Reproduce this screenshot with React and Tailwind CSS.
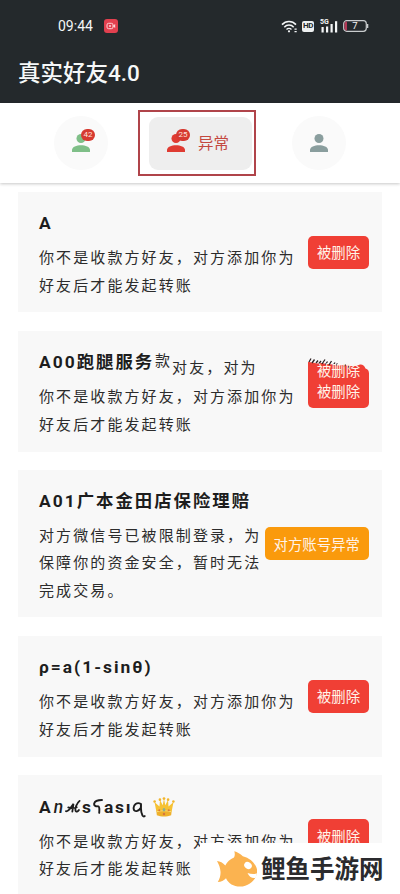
import React, { useState } from "react";
import clsx from "clsx";

const DELETED_TEXT = ["你不是收款方好友，对方添加你为", "好友后才能发起转账"];

const friendList = [
    { id: 1, name: "A", lines: DELETED_TEXT, status: "deleted", height: "h-[120px]" },
    { id: 2, name: "A00跑腿服务", lines: DELETED_TEXT, status: "deleted", height: "h-[121px]", overlap: true },
    {
        id: 3,
        name: "A01广本金田店保险理赔",
        lines: ["对方微信号已被限制登录，为", "保障你的资金安全，暂时无法", "完成交易。"],
        status: "abnormal",
        height: "h-[147px]",
    },
    { id: 4, name: "ρ=a(1-sinθ)", lines: DELETED_TEXT, status: "deleted", height: "h-[121px]" },
    { id: 5, name: "fancy", lines: DELETED_TEXT, status: "deleted", height: "h-[121px]" },
];

const PersonIcon = ({ className }) => (
    <svg viewBox="0 0 18 18" className={clsx("h-[18px] w-[18px]", className)} fill="currentColor">
        <circle cx="9" cy="4.500" r="4.500" />
        <path d="M0 18v-2c0-3.200 4.600-4.800 9-4.800s9 1.600 9 4.800v2z" />
    </svg>
);

const CrownIcon = () => (
    <svg viewBox="0 0 24 22" className="ml-[7px] h-[20px] w-[22px]">
        <path d="M3.600 16 1.500 5.500 7 10.500 7.600 3.200 10.600 9 12 1.800 13.400 9l3-5.800.6 7.300 5.500-5L20.400 16z" fill="#f6c234" />
        <path d="M3.600 15.200c5-1.600 11.800-1.600 16.800 0l-.5 4.800c-4.800 1.800-11 1.800-15.800 0z" fill="#eeb02c" />
        <path d="M4 16.200c5-1.500 11-1.500 16 0" stroke="#fde27a" strokeWidth="1" fill="none" />
        <g fill="#f2b52b">
            <circle cx="1.700" cy="5" r="1.400" />
            <circle cx="7.500" cy="2.900" r="1.400" />
            <circle cx="12" cy="1.700" r="1.500" />
            <circle cx="16.500" cy="2.900" r="1.400" />
            <circle cx="22.300" cy="5" r="1.400" />
        </g>
        <ellipse cx="12" cy="14" rx="1.500" ry="2" fill="#8fae8f" />
        <circle cx="12" cy="18.700" r="1.300" fill="#d8763f" />
        <circle cx="6.800" cy="14.500" r="1.100" fill="#d8763f" />
        <circle cx="17.200" cy="14.500" r="1.100" fill="#d8763f" />
    </svg>
);

const StatusBar = () => (
    <div className="flex h-[50px] items-center pt-[2px] text-[#f4f6f7]">
        <span className="ml-[58px] w-[36px] whitespace-nowrap text-[14px] leading-none">09:44</span>
        <svg viewBox="0 0 14 14" className="ml-[10px] h-[14px] w-[14px]">
            <rect width="14" height="14" rx="3" fill="#e2404f" />
            <rect x="3" y="4.300" width="6" height="5.400" rx="1.600" fill="none" stroke="#ffd5d8" strokeWidth="1" />
            <circle cx="6" cy="7" r="1" fill="#ffd5d8" />
            <path d="m9.200 6.600 2-1.500v3.800l-2-1.500z" fill="#ffd5d8" />
        </svg>
        <svg viewBox="0 0 17 13" className="ml-[163px] h-[13px] w-[17px]" fill="none" stroke="currentColor">
            <path d="M1 4.600c3.800-4.200 10.200-4.200 14 0" strokeWidth="1.600" />
            <path d="M3.300 7.200c2.600-2.900 6.800-2.900 9.400 0" strokeWidth="1.500" />
            <path d="M5.500 9.500c1.500-1.500 3.500-1.500 5 0" strokeWidth="1.400" />
            <circle cx="8" cy="11.300" r="1.100" fill="currentColor" stroke="none" />
            <path d="M13.500 9.200h2.200M13.500 11.700h2.200" strokeWidth="1.200" />
        </svg>
        <span className="ml-[4px] flex h-[11px] w-[12px] items-center justify-center rounded-[2px] bg-[#eef0f1] text-[8px] font-bold leading-none tracking-[-0.3px] text-[#25282c]">
            HD
        </span>
        <div className="relative ml-[6px] h-[13px] w-[18px]">
            <span className="absolute left-0 top-[-1px] text-[7px] font-bold leading-none">5G</span>
            <svg viewBox="0 0 18 13" className="h-full w-full" fill="currentColor">
                <rect x="1.500" y="7" width="2.200" height="5.500" />
                <rect x="6" y="6.500" width="2.200" height="6" />
                <rect x="10.500" y="4" width="2.200" height="8.500" />
                <rect x="15" y="1.200" width="2.200" height="11.300" />
            </svg>
        </div>
        <div className="relative ml-[5px] h-[12px] w-[26px]">
            <svg viewBox="0 0 26 12" className="h-full w-full">
                <rect x="0.700" y="0.700" width="22.600" height="10.600" rx="3" fill="none" stroke="#c9ccce" strokeWidth="1.200" />
                <path d="M4 1.400h-.5a2 2 0 0 0-2 2v5.200a2 2 0 0 0 2 2H4z" fill="#b23a57" />
                <path d="M24.600 4v4" stroke="#c9ccce" strokeWidth="1.400" />
            </svg>
            <span className="absolute inset-0 pr-[2px] text-center text-[9.500px] leading-[12px]">7</span>
        </div>
    </div>
);

const Badge = ({ count }) => (
    <span className="absolute left-[9px] top-[-5px] flex h-[12px] w-[14px] items-center justify-center rounded-full bg-[#d63a31] text-[8px] leading-none text-[#ffe3dc]">
        {count}
    </span>
);

const TabBar = ({ active, onChange }) => (
    <div className="relative z-10 flex h-[80px] shrink-0 items-center bg-white shadow-[0_1px_3px_rgba(0,0,0,0.22)]">
        <button
            onClick={() => onChange("normal")}
            className="ml-[54px] flex h-[54px] w-[54px] items-center justify-center rounded-full bg-[#fafafa]"
        >
            <span className="relative">
                <PersonIcon className="text-[#7fbf88]" />
                <Badge count="42" />
            </span>
        </button>
        <div className="ml-[30px] mt-[-1px] flex h-[66px] w-[118px] items-center border-2 border-[#b0444a] pl-[9px] pt-px">
            <button
                onClick={() => onChange("abnormal")}
                className={clsx(
                    "flex h-[53px] w-[103px] items-center rounded-[9px] pl-[18px]",
                    active === "abnormal" ? "bg-[#eeeeee]" : "bg-[#fafafa]"
                )}
            >
                <span className="relative">
                    <PersonIcon className="text-[#df3b32]" />
                    <Badge count="25" />
                </span>
                <span className="ml-[13px] pt-[3px] text-[15.500px] leading-none text-[#c4483f]">异常</span>
            </button>
        </div>
        <button
            onClick={() => onChange("unknown")}
            className="ml-[36px] flex h-[54px] w-[54px] items-center justify-center rounded-full bg-[#fafafa]"
        >
            <PersonIcon className="text-[#8a9e9e]" />
        </button>
    </div>
);

const FancyName = () => (
    <span className="flex items-center">
        <span>A</span>
        <span className="ml-px font-medium italic">n</span>
        <svg viewBox="0 0 17 15" className="mr-[1px] h-[15px] w-[16px]" fill="none" stroke="currentColor" strokeWidth="1.900" strokeLinecap="round">
            <path d="M1 12.500c2.500.8 5-3.500 8-7.800L7.800 13M3.500 8.500c3 1.300 6 .8 9-.2M15.500 1.500C12.500 4 10.500 9 11.200 12c.4 1.700 2.600.8 3.600-.8" />
        </svg>
        <span>s</span>
        <svg viewBox="0 0 10 16" className="mr-[1px] h-[16px] w-[10px]" fill="none" stroke="currentColor" strokeWidth="1.900" strokeLinecap="round">
            <path d="M9 1C5.500 1 1.800 2.200 1.200 4.500.7 7 3 7.500 5 7.300c1.500 0 1.500 3 1.200 6.500" />
        </svg>
        <span className="tracking-[1.700px]">ası</span>
        <svg viewBox="0 0 14 17" className="mt-[6px] h-[17px] w-[14px]" fill="none" stroke="currentColor" strokeWidth="1.900" strokeLinecap="round">
            <path d="M9 3C5 .5 1 4 1.700 8c.6 3.500 5 2.500 7.300-1.500V3c-.3 4 .2 9 1.500 11.500.6 1 1.500 1.200 2.200.6" />
        </svg>
        <CrownIcon />
    </span>
);

const StatusTag = ({ status, overlap }) => (
    <div className="relative shrink-0">
        <div
            className={clsx(
                "flex h-[33px] items-center justify-center rounded-[5px] pt-[5px] text-[14.400px] leading-none text-[#fff3e9]",
                status === "deleted" ? "w-[61px] bg-[#f03f35]" : "w-[104.500px] bg-[#fa9a0c]"
            )}
        >
            {status === "deleted" ? "被删除" : "对方账号异常"}
        </div>
        {overlap && (
            <div className="absolute left-0 top-[-17px] h-[24px] w-[61px]">
                <svg viewBox="0 0 61 24" className="absolute inset-0 h-full w-full">
                    <path d="M0 24V4l5 .500 4 1 5-.5 5 1 6 .5 6 1 5-.5 6 1 6 0 4-1.500c2-.5 4.500 1 5.500 4 2.500.8 3.500 2.500 3.500 5v9z" fill="#f03f35" />
                    <path d="m1 4 2-3.500M4 5l2.500-3.500M8 5l2-2.500M11 5.500l2-2.500M14 6l3-4.500M17.500 6.500l2-3M21 7l2.500-4M25 7.500l2-3M28 7.500l1.500-2M36 9l1.500-2.500M40 10l1-2" stroke="#302326" strokeWidth="1.300" />
                </svg>
                <span className="absolute inset-x-0 top-[6px] text-center text-[14.400px] leading-[16px] text-[#fff3e9]">被删除</span>
            </div>
        )}
    </div>
);

const FriendCard = ({ friend }) => (
    <div className={clsx("flex shrink-0 items-center justify-between bg-[#f8f8f8] pl-[21px] pr-[13px]", friend.height)}>
        <div className="whitespace-nowrap pt-[6px]">
            <h2 className="relative flex h-[26px] items-center text-[17.400px] font-bold leading-[26px] tracking-[2px] text-[#1d1d1d]">
                {friend.name === "fancy" ? <FancyName /> : friend.name}
                {friend.overlap && (
                    <span className="absolute left-[116px] top-[-1px] flex text-[15px] font-normal tracking-[2.100px] text-[#2c2c2c]">
                        <span>款</span>
                        <span className="mt-[7px]">对友，对为</span>
                    </span>
                )}
            </h2>
            <div className="mt-[9px] text-[15px] leading-[27.200px] tracking-[2.100px] text-[#2c2c2c]">
                {friend.lines.map((line) => (
                    <p key={line}>{line}</p>
                ))}
            </div>
        </div>
        <StatusTag status={friend.status} overlap={friend.overlap} />
    </div>
);

const Watermark = () => (
    <div className="absolute bottom-0 right-0 flex h-[51px] w-[200px] items-center bg-white pl-[17px]">
        <svg viewBox="0 0 40 36" className="h-[36px] w-[40px] shrink-0">
            <path
                d="M0 10c3 .3 6 1.800 8.300 4.500C10 11 13 8 17 6.500 18 4.500 18 2.500 17.300.3c3.200 1 6 2.500 8.500 5C32 7 36.500 10.500 39 15.500c1.500 3 1.400 6 .4 8.500-2 6.500-8.500 11.400-16.400 11.500-6.500 0-11.500-3-14-8.300C7 29.500 4 31 .8 31c2-3.500 3-7 2.700-10.500C3.300 17 2 13.500 0 10z"
                fill="#fbb350"
            />
            <ellipse cx="31" cy="14.500" rx="4" ry="3.300" transform="rotate(35 31 14.500)" fill="#fff" />
            <path d="M40 22.500c-3.500 1-6.500.5-9.500-.5 1.500 3.500 4 5.500 8 5z" fill="#fff" />
        </svg>
        <span className="ml-[4px] whitespace-nowrap pt-[4px] text-[24.500px] font-bold leading-none text-[#2b2b2e]">鲤鱼手游网</span>
    </div>
);

const App = () => {
    const [activeTab, setActiveTab] = useState("abnormal");

    return (
        <div
            lang="zh-CN"
            className="relative flex h-[894px] w-[400px] flex-col overflow-hidden bg-white font-[Roboto,'Noto_Sans_CJK_SC',sans-serif]"
        >
            <header className="h-[103px] shrink-0 bg-[#24292c]">
                <StatusBar />
                <h1 className="pl-[18px] pt-px text-[22.500px] font-medium leading-[44px] text-[#f6f8f8]">真实好友4.0</h1>
            </header>
            <TabBar active={activeTab} onChange={setActiveTab} />
            <main className="flex flex-col gap-[18.500px] px-[18px] pt-[9px]">
                {friendList.map((friend) => (
                    <FriendCard key={friend.id} friend={friend} />
                ))}
            </main>
            <Watermark />
        </div>
    );
};

export default App;
